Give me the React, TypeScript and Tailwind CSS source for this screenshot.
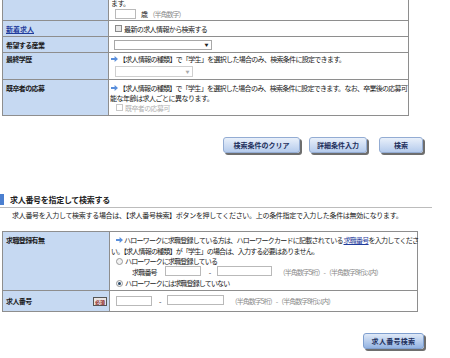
import React from "react";

const Arrow = () => (
  <svg width="7" height="6" viewBox="0 0 7 6" className="inline-block shrink-0">
    <path d="M0 2h3.6V0L7 3 3.6 6V4H0z" fill="#5a8fdc" />
  </svg>
);

const Check = ({ disabled }: { disabled?: boolean }) => (
  <span
    className={
      disabled
        ? "inline-block w-[7px] h-[7px] border border-[#c8c8c8] bg-white shrink-0"
        : "inline-block w-[7px] h-[7px] border border-[#8a8a8a] bg-[#e8e8e8] shrink-0"
    }
  />
);

const Radio = ({ checked }: { checked?: boolean }) => (
  <span className="inline-flex items-center justify-center w-[7px] h-[7px] rounded-full border border-[#9a9a9a] bg-[#f2f2f2] shrink-0">
    {checked ? <span className="w-[3px] h-[3px] rounded-full bg-[#2a4a6a]" /> : null}
  </span>
);

const Btn = ({ label, w, strong }: { label: string; w: string; strong?: boolean }) => (
  <div
    className={
      (strong
        ? "bg-gradient-to-b from-[#dfe9f7] to-[#93b3e2] border-[#7f9fcf] [letter-spacing:0.3px] "
        : "bg-gradient-to-b from-[#e9f0fa] to-[#b5cbec] border-[#93acd3] [letter-spacing:0px] ") +
      w +
      " h-[16px] rounded-[3px] border flex items-center justify-center font-bold text-[#1d2f5c] shadow-[2px_2px_0_#6e6e6e]"
    }
  >
    {label}
  </div>
);

const Hint = ({ children }: { children: React.ReactNode }) => (
  <span className="text-[#8a8a8a] [letter-spacing:-1px]">{children}</span>
);

const Input = ({ w }: { w: string }) => (
  <span className={w + " inline-block h-[10px] border border-[#b9b9b9] bg-white shrink-0"} />
);

export default function App() {
  return (
    <div className="w-[450px] h-[358px] overflow-hidden bg-white text-[#1a1a1a] text-[7px] leading-[10px] [letter-spacing:-0.6px] font-['Noto_Sans_CJK_JP','Noto_Sans_CJK_SC',sans-serif]">
      {/* top table */}
      <div className="ml-[2px] w-[407px] border-x border-b border-[#8e8e8e]">
        <div className="grid grid-cols-[106px_1fr] h-[21px] border-b border-[#8e8e8e]">
          <div className="bg-[#c6d9f2] border-r border-[#8e8e8e]" />
          <div className="pl-[2px]">
            <div className="mt-[-1px] h-[9px] leading-[9px]">ます。</div>
            <div className="mt-[1px] flex items-center h-[10px] pl-[4px] whitespace-nowrap">
              <Input w="w-[21px]" />
              <span className="ml-[5px]">歳</span>
              <span className="ml-[1px]"><Hint>（半角数字）</Hint></span>
            </div>
          </div>
        </div>
        <div className="grid grid-cols-[106px_1fr] h-[16px] border-b border-[#8e8e8e]">
          <div className="bg-[#c6d9f2] border-r border-[#8e8e8e] flex items-center pl-[3px] font-bold [letter-spacing:0px]">
            <span className="text-[#1f3c9c] underline">新着求人</span>
          </div>
          <div className="flex items-center pl-[6px] gap-[2px] whitespace-nowrap">
            <Check />
            <span>最新の求人情報から検索する</span>
          </div>
        </div>
        <div className="grid grid-cols-[106px_1fr] h-[16px] border-b border-[#8e8e8e]">
          <div className="bg-[#c6d9f2] border-r border-[#8e8e8e] flex items-center pl-[3px] font-bold">
            希望する産業
          </div>
          <div className="flex items-center pl-[5px]">
            <span className="w-[98px] h-[10px] border border-[#a8a8a8] bg-white flex items-center justify-end pr-[3px] text-[4px] text-[#222]">▼</span>
          </div>
        </div>
        <div className="grid grid-cols-[106px_1fr] h-[27px] border-b border-[#8e8e8e]">
          <div className="bg-[#c6d9f2] border-r border-[#8e8e8e] pl-[3px] pt-[1px] font-bold">
            最終学歴
          </div>
          <div className="pl-[2px] pt-[1px] whitespace-nowrap">
            <div className="flex items-center gap-[1px] h-[10px]">
              <Arrow />
              <span className="[letter-spacing:-0.7px]">【求人情報の種類】で「学生」を選択した場合のみ、検索条件に設定できます。</span>
            </div>
            <div className="mt-[2px] pl-[4px]">
              <span className="w-[78px] h-[11px] border border-[#cfcfcf] bg-white flex items-center justify-end pr-[3px] text-[4px] text-[#aaa]">▼</span>
            </div>
          </div>
        </div>
        <div className="grid grid-cols-[106px_1fr] h-[35px]">
          <div className="bg-[#c6d9f2] border-r border-[#8e8e8e] pl-[3px] pt-[3px] font-bold">
            既卒者の応募
          </div>
          <div className="pl-[1px] pt-[3px] whitespace-nowrap">
            <div className="flex items-center gap-[1px] h-[10px] pl-[1px]">
              <Arrow />
              <span className="[letter-spacing:-0.72px]">【求人情報の種類】で「学生」を選択した場合のみ、検索条件に設定できます。なお、卒業後の応募可</span>
            </div>
            <div className="h-[10px] [letter-spacing:-0.5px]">能な年齢は求人ごとに異なります。</div>
            <div className="flex items-center gap-[2px] h-[9px] pl-[6px] text-[#b0b0b0]">
              <Check disabled />
              <span>既卒者の応募可</span>
            </div>
          </div>
        </div>
      </div>

      {/* buttons */}
      <div className="mt-[21px] flex justify-end pr-[27px] h-[18px]">
        <Btn label="検索条件のクリア" w="w-[77px]" />
        <div className="w-[9px]" />
        <Btn label="詳細条件入力" w="w-[58px]" />
        <div className="w-[12px]" />
        <Btn label="検索" w="w-[44px]" />
      </div>

      {/* section title */}
      <div className="mt-[39px] flex items-center h-[11px]">
        <div className="w-[4px] h-[11px] bg-[#4b7fd0]" />
        <span className="ml-[6px] text-[8px] font-bold text-[#222] [letter-spacing:-0.3px]">求人番号を指定して検索する</span>
      </div>
      <div className="mt-[2px] w-[432px] h-px bg-[#bcbcbc]" />
      <div className="mt-[2px] pl-[12px] h-[10px] whitespace-nowrap [letter-spacing:-0.3px]">
        求人番号を入力して検索する場合は、【求人番号検索】ボタンを押してください。上の条件指定で入力した条件は無効になります。
      </div>

      {/* bottom table */}
      <div className="mt-[11px] ml-[2px] w-[416px] border border-[#8e8e8e]">
        <div className="grid grid-cols-[107px_1fr] h-[59px] border-b border-[#8e8e8e]">
          <div className="bg-[#c6d9f2] border-r border-[#8e8e8e] pl-[3px] pt-[3px] font-bold">
            求職登録有無
          </div>
          <div className="pl-[1px] pt-[3px] whitespace-nowrap">
            <div className="flex items-center gap-[1px] h-[10px] pl-[5px]">
              <Arrow />
              <span className="[letter-spacing:-0.74px]">
                ハローワークに求職登録している方は、ハローワークカードに記載されている{" "}
                <span className="text-[#1f3c9c] underline">求職番号</span>を入力してくださ
              </span>
            </div>
            <div className="h-[11px] flex items-center [letter-spacing:-0.8px]">い。【求人情報の種類】が「学生」の場合は、入力する必要はありません。</div>
            <div className="h-[10px] flex items-center gap-[2px] pl-[5px] [letter-spacing:-0.85px]">
              <Radio />
              <span>ハローワークに求職登録している</span>
            </div>
            <div className="h-[12px] flex items-center pl-[21px]">
              <span className="[letter-spacing:-0.8px]">求職番号</span>
              <span className="ml-[8px]"><Input w="w-[36px]" /></span>
              <span className="ml-[8px]">-</span>
              <span className="ml-[6px]"><Input w="w-[55px]" /></span>
              <span className="ml-[7px]"><Hint>（半角数字5桁）-（半角数字8桁以内）</Hint></span>
            </div>
            <div className="h-[10px] flex items-center gap-[2px] pl-[5px] [letter-spacing:-0.85px]">
              <Radio checked />
              <span>ハローワークには求職登録していない</span>
            </div>
          </div>
        </div>
        <div className="grid grid-cols-[107px_1fr] h-[20px]">
          <div className="bg-[#c6d9f2] border-r border-[#8e8e8e] pl-[3px] pr-[2px] flex items-center justify-between font-bold">
            <span>求人番号</span>
            <span className="h-[9px] px-[1px] border border-[#555] bg-[#e9e4e4] text-[5px] leading-[7px] text-[#8a1a1a] flex items-center [letter-spacing:0px]">必須</span>
          </div>
          <div className="flex items-center pl-[6px] whitespace-nowrap">
            <Input w="w-[36px]" />
            <span className="ml-[7px]">-</span>
            <span className="ml-[6px]"><Input w="w-[57px]" /></span>
            <span className="ml-[7px]"><Hint>（半角数字5桁）-（半角数字8桁以内）</Hint></span>
          </div>
        </div>
      </div>

      <div className="mt-[21px] flex justify-end pr-[26px]">
        <Btn label="求人番号検索" w="w-[61px]" strong />
      </div>
    </div>
  );
}
